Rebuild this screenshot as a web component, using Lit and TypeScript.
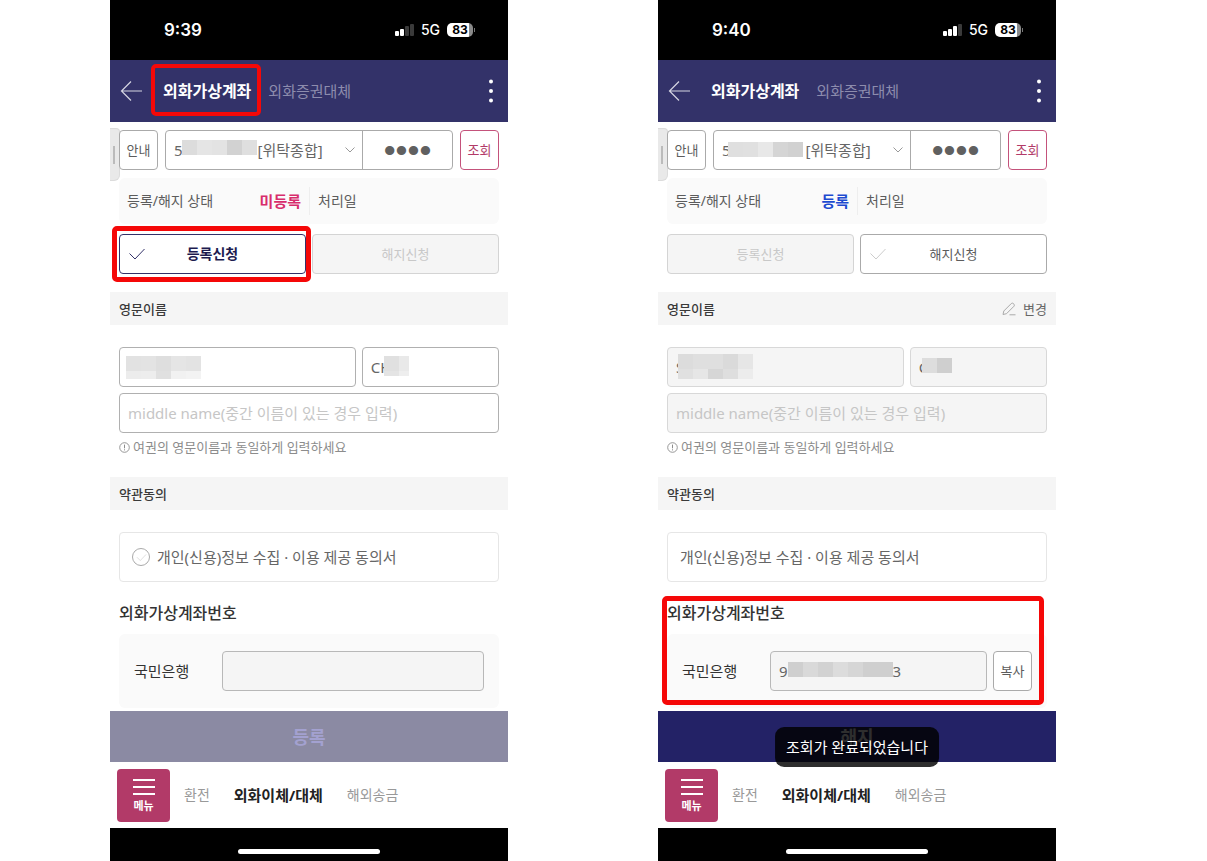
import { LitElement, html, svg, css, nothing } from "lit";
import { customElement, property } from "lit/decorators.js";

interface MaskRow {
  height: number;
  cells: string[];
}

interface Screen {
  id: string;
  time: string;
  bars: number;
  registered: boolean;
  account: string;
  accountMask: MaskRow[];
  lastName: string;
  lastMask: MaskRow[];
  firstName: string;
  firstMask: MaskRow[];
  bankNumber: string;
  bankMask: MaskRow[];
  toast: string;
}

const EM = "\u2003";

const SCREENS: Screen[] = [
  {
    id: "before",
    time: "9:39",
    bars: 2,
    registered: false,
    account: `5${EM.repeat(5)}[위탁종합]`,
    accountMask: [{ height: 15, cells: ["#dcdcdc", "#e5e5e5", "#e3e3e3", "#d2d2d2", "#dfdfdf"] }],
    lastName: "",
    lastMask: [
      { height: 15, cells: ["#e2e2e2", "#e3e3e3", "#dedede", "#e5e5e5", "#e3e3e3"] },
      { height: 8, cells: ["#ececec", "#ededed", "#e0e0e0", "#f1f1f1", "#f3f3f3"] },
    ],
    firstName: "CH",
    firstMask: [
      { height: 15, cells: ["#e0e0e0", "#e9e9e9"] },
      { height: 5, cells: ["#e4e4e4", "#eeeeee"] },
    ],
    bankNumber: "",
    bankMask: [],
    toast: "",
  },
  {
    id: "after",
    time: "9:40",
    bars: 3,
    registered: true,
    account: `5${EM.repeat(5)}[위탁종합]`,
    accountMask: [{ height: 15, cells: ["#dfdfdf", "#e0e0e0", "#e8e8e8", "#d5d5d5", "#d1d1d1"] }],
    lastName: "S",
    lastMask: [
      { height: 15, cells: ["#dcdcdc", "#dfdfdf", "#dfdfdf", "#dadada", "#e6e6e6"] },
      { height: 10, cells: ["#e0e0e0", "#e6e6e6", "#d6d6d6", "#dedede", "#ececec"] },
    ],
    firstName: "C",
    firstMask: [{ height: 15, cells: ["#dddddd", "#cfcfcf"] }],
    bankNumber: `9${EM.repeat(7)}3`,
    bankMask: [
      { height: 15, cells: ["#cfcfcf", "#d9d9d9", "#d2d2d2", "#dcdcdc", "#d6d6d6", "#cfcfcf", "#cfcfcf"] },
    ],
    toast: "조회가 완료되었습니다",
  },
];

const CELL = 15;

function mosaic(rows: MaskRow[], place: string, trim = 0) {
  if (!rows.length) return nothing;
  const width = rows[0].cells.length * CELL - trim;
  const height = rows.reduce((sum, row) => sum + row.height, 0);
  let top = 0;
  const rects = rows.map((row) => {
    const y = top;
    top += row.height;
    return row.cells.map(
      (fill, i) => svg`<rect x=${i * CELL} y=${y} width=${CELL} height=${row.height} fill=${fill}></rect>`
    );
  });
  return html`<svg class="mask ${place}" width=${width} height=${height} shape-rendering="crispEdges" aria-hidden="true">${rects}</svg>`;
}

const checkMark = (cls: string) => html`
  <svg class=${cls} width="18" height="14" viewBox="0 0 18 14" fill="none" stroke="currentColor" aria-hidden="true">
    <path d="M1.5 6.5 L7 12 L16.5 2"></path>
  </svg>`;

@customElement("phone-screen")
export class PhoneScreen extends LitElement {
  @property({ attribute: false }) data!: Screen;

  static styles = css`
    :host {
      display: flex;
      flex-direction: column;
      min-width: 0;
      background: #fff;
      color: #5c5c5c;
      font-family: "Noto Sans", "Noto Sans CJK KR", sans-serif;
      font-size: 15px;
      line-height: 20px;
    }
    * { box-sizing: border-box; }
    button, input, select { font: inherit; color: inherit; margin: 0; }
    button { padding: 0; border: 0; background: none; }
    a { color: inherit; text-decoration: none; }
    h2 { margin: 0; font-weight: 500; }
    svg { display: block; }

    .status {
      display: flex;
      align-items: center;
      justify-content: space-between;
      height: 60px;
      padding: 0 33px 0 54px;
      background: #000;
      color: #fff;
      font-family: Inter, sans-serif;
    }
    .time { font-size: 17px; font-weight: 600; }
    .signals { display: flex; align-items: center; gap: 7px; font-size: 14px; font-weight: 500; }
    .battery { display: flex; align-items: center; gap: 1px; }
    .level {
      width: 26px;
      height: 14px;
      border-radius: 5px;
      background: linear-gradient(90deg, #fff 83%, #8a8a8a 83%);
      color: #000;
      font-size: 12px;
      font-weight: 700;
      line-height: 14px;
      text-align: center;
    }
    .tip { width: 1px; height: 4px; background: #777; }

    .header {
      display: flex;
      align-items: center;
      height: 62px;
      padding: 0 11px 0 10px;
      background: #333269;
      color: #fff;
    }
    .tabs { display: flex; flex: 1; align-items: center; gap: 17px; padding-left: 20px; }
    .tab { position: relative; color: #8d8cad; }
    .tab.current { color: #fff; font-size: 16px; font-weight: 700; }

    .outline::after {
      content: "";
      position: absolute;
      z-index: 2;
      border: 5px solid #f50808;
      border-radius: 5px;
      pointer-events: none;
    }
    .tab.outline::after { inset: -17px -10px -15px -12px; border-width: 4px; }
    .choice.outline::after { inset: -9px -6px -9px -8px; }
    .virtual.outline::after { inset: -7px 3px 6px -5px; }

    .content { flex: 1; padding-top: 8px; }
    .block { margin: 0 9px; }

    .query { position: relative; display: flex; gap: 7px; }
    .handle {
      position: absolute;
      left: -9px;
      top: -2px;
      width: 10px;
      height: 53px;
      border-radius: 0 4px 6px 0;
      border: 1px solid #dcdcdc;
      border-left: 0;
      background: #e9e9e9;
    }
    .handle::after {
      content: "";
      position: absolute;
      left: 3px;
      top: 17px;
      width: 2px;
      height: 18px;
      background: #bbb;
    }
    .small {
      flex: none;
      position: relative;
      width: 39px;
      height: 40px;
      border: 1px solid #aaa;
      border-radius: 4px;
      background: #fff;
      font-size: 13px;
    }
    .small.accent { border-color: #c4527b; color: #b23a68; }
    .account {
      display: flex;
      flex: 1;
      min-width: 0;
      height: 40px;
      border: 1px solid #aaa;
      border-radius: 4px;
    }
    .picker { position: relative; flex: 1; min-width: 0; color: #666; }
    .picker select {
      appearance: none;
      width: 100%;
      height: 100%;
      padding: 0 24px 0 8px;
      border: 0;
      background: none;
    }
    .chevron { position: absolute; right: 6px; top: 15px; color: #999; pointer-events: none; }
    .pin {
      width: 90px;
      padding: 0;
      border: 0;
      border-left: 1px solid #aaa;
      background: none;
      color: #606060;
      font-family: "Liberation Sans", sans-serif;
      font-size: 34px;
      text-align: center;
    }

    .state {
      display: grid;
      grid-template-columns: 1fr 1fr;
      align-items: center;
      height: 46px;
      margin-top: 8px;
      border-radius: 6px;
      background: #fafafa;
      font-size: 14px;
    }
    .cell { display: flex; justify-content: space-between; align-items: center; height: 28px; padding: 0 8px; }
    .cell + .cell { border-left: 1px solid #eee; }
    .value { font-size: 15px; font-weight: 700; color: #d82d6c; }
    .value.on { color: #1d4ad0; }

    .choices { display: grid; grid-template-columns: 1fr 1fr; gap: 6px; margin-top: 10px; }
    .choice {
      position: relative;
      height: 40px;
      border: 1px solid #aaa;
      border-radius: 4px;
      background: #fff;
      font-size: 13px;
    }
    .choice:disabled { border-color: #d4d4d4; background: #f5f5f5; color: #c8c8c8; }
    .choice.picked { border-color: #333269; color: #1d1b4f; font-size: 14px; font-weight: 700; }
    .tick { position: absolute; left: 8px; top: 12px; color: #ccc; }
    .picked .tick { color: #333269; }

    .band {
      display: flex;
      justify-content: space-between;
      align-items: center;
      height: 33px;
      padding: 0 9px;
      background: #f5f5f5;
    }
    .band h2 { font-size: 13px; color: #3a3a3a; }
    .names-band { margin-top: 18px; }
    .terms-band { margin-top: 20px; }
    .change { display: flex; align-items: center; gap: 7px; font-size: 13px; color: #666; }
    .change svg { color: #aaa; }

    .names { display: grid; grid-template-columns: 19fr 11fr; gap: 6px; margin-top: 22px; }
    .field { position: relative; min-width: 0; }
    .text {
      width: 100%;
      height: 40px;
      padding: 0 8px;
      border: 1px solid #b0b0b0;
      border-radius: 4px;
      background: #fff;
      color: #666;
    }
    .text::placeholder { color: #c6c6c6; opacity: 1; }
    .text:disabled { border-color: #d8d8d8; background: #f5f5f5; }
    .middle { margin-top: 6px; }
    .hint { display: flex; align-items: center; gap: 3px; margin-top: 4px; font-size: 13px; color: #8c8c8c; }

    .mask { position: absolute; z-index: 1; pointer-events: none; }
    .before .at-account { left: 16px; top: 9px; }
    .after .at-account { left: 14px; top: 11px; }
    .before .at-last { left: 7px; top: 9px; }
    .after .at-last { left: 11px; top: 7px; }
    .before .at-first { left: 22px; top: 9px; }
    .after .at-first { left: 12px; top: 11px; }
    .at-bank { left: 18px; top: 11px; }

    .terms {
      display: flex;
      align-items: center;
      gap: 7px;
      height: 50px;
      margin-top: 22px;
      padding: 0 12px;
      border: 1px solid #e6e6e6;
      border-radius: 4px;
      color: #666;
    }
    .round { display: grid; place-items: center; color: #ccc; }
    .round > * { grid-area: 1 / 1; }
    .round input { appearance: none; width: 18px; height: 18px; border: 1px solid #aaa; border-radius: 50%; }
    .round svg { width: 11px; height: 9px; pointer-events: none; }

    .virtual { position: relative; padding-bottom: 3px; margin-top: 21px; }
    .virtual h2 { font-size: 16px; color: #333; }
    .bank {
      display: flex;
      align-items: center;
      gap: 6px;
      height: 74px;
      margin-top: 11px;
      padding: 0 15px;
      border-radius: 6px;
      background: #fafafa;
    }
    .bank label { width: 82px; color: #333; }
    .bank .field { flex: 1; }
    .bank .text { border-color: #b8b8b8; }
    .text:read-only { background: #f5f5f5; }

    .action { position: relative; }
    .submit {
      display: block;
      width: 100%;
      height: 51px;
      background: #232266;
      color: #fff;
      font-size: 18px;
      font-weight: 700;
    }
    .submit:disabled { background: #8b8aa3; color: #a3a1d0; }
    .toast {
      position: absolute;
      left: 50%;
      bottom: -5px;
      transform: translateX(-50%);
      padding: 10px 11px;
      border-radius: 9px;
      background: rgba(0, 0, 0, 0.82);
      color: #fff;
      white-space: nowrap;
    }

    .nav { display: flex; align-items: center; gap: 24px; height: 66px; padding-left: 7px; font-size: 14px; color: #999; }
    .menu {
      display: flex;
      flex-direction: column;
      align-items: center;
      justify-content: center;
      width: 53px;
      height: 53px;
      margin-right: -10px;
      border-radius: 4px;
      background: #b23a68;
      color: #fff;
      font-size: 11px;
      font-weight: 700;
      line-height: 16px;
    }
    .nav .here { font-size: 15px; font-weight: 700; color: #222; }
    .home { display: flex; justify-content: center; align-items: flex-end; height: 33px; padding-bottom: 7px; background: #000; }
    .home span { width: 142px; height: 5px; border-radius: 3px; background: #fff; }
  `;

  render() {
    const d = this.data;
    const on = d.registered;
    return html`
      <div class="status">
        <span class="time">${d.time}</span>
        <div class="signals">
          <svg width="19" height="12" aria-hidden="true">
            ${[5, 7, 10, 12].map(
              (h, i) => svg`<rect x=${i * 5} y=${12 - h} width="4" height=${h} rx="1" fill=${i < d.bars ? "#fff" : "#3a3a3a"}></rect>`
            )}
          </svg>
          <span>5G</span>
          <div class="battery"><span class="level">83</span><span class="tip"></span></div>
        </div>
      </div>

      <header class="header">
        <button aria-label="뒤로">
          <svg width="23" height="22" viewBox="0 0 23 22" fill="none" stroke="#d5d5e2" stroke-width="1.2">
            <path d="M22 11 H1.5 M11 1.5 L1.5 11 L11 20.5"></path>
          </svg>
        </button>
        <nav class="tabs">
          <a class="tab current ${on ? "" : "outline"}" href="#account">외화가상계좌</a>
          <a class="tab" href="#transfer">외화증권대체</a>
        </nav>
        <button aria-label="더보기">
          <svg width="12" height="26" viewBox="0 0 12 26" fill="#fff">
            <circle cx="6" cy="3.5" r="2"></circle><circle cx="6" cy="13" r="2"></circle><circle cx="6" cy="22.5" r="2"></circle>
          </svg>
        </button>
      </header>

      <main class="content ${d.id}">
        <div class="block query">
          <span class="handle"></span>
          <button class="small">안내</button>
          <div class="account">
            <div class="picker">
              <select aria-label="계좌"><option>${d.account}</option></select>
              ${mosaic(d.accountMask, "at-account")}
              <svg class="chevron" width="12" height="8" viewBox="0 0 12 8" fill="none" stroke="currentColor"><path d="M1.5 1.5 L6 6 L10.5 1.5"></path></svg>
            </div>
            <input class="pin" type="password" aria-label="계좌 비밀번호" .value=${"0000"} />
          </div>
          <button class="small accent">조회</button>
        </div>

        <div class="block state">
          <div class="cell"><span>등록/해지 상태</span><span class="value ${on ? "on" : ""}">${on ? "등록" : "미등록"}</span></div>
          <div class="cell"><span>처리일</span></div>
        </div>

        <div class="block choices">
          <button class="choice ${on ? "" : "picked outline"}" ?disabled=${on}>${on ? nothing : checkMark("tick")}등록신청</button>
          <button class="choice" ?disabled=${!on}>${on ? checkMark("tick") : nothing}해지신청</button>
        </div>

        <div class="band names-band">
          <h2>영문이름</h2>
          ${on
            ? html`<button class="change">
                <svg width="14" height="14" viewBox="0 0 14 14" fill="none" stroke="currentColor" stroke-linejoin="round">
                  <path d="M1 12.5 L1.8 9 L9.3 1.5 Q10.3 .7 11.3 1.5 L12 2.2 Q12.8 3.2 12 4.2 L4.5 11.7 Z M7.5 12.8 H13.5"></path>
                </svg>변경</button>`
            : nothing}
        </div>

        <div class="block names">
          <div class="field">
            <input class="text" aria-label="영문 성" .value=${d.lastName} ?disabled=${on} />${mosaic(d.lastMask, "at-last")}
          </div>
          <div class="field">
            <input class="text" aria-label="영문 이름" .value=${d.firstName} ?disabled=${on} />${mosaic(d.firstMask, "at-first", on ? 0 : 5)}
          </div>
        </div>
        <div class="block middle">
          <input class="text" aria-label="middle name" placeholder="middle name(중간 이름이 있는 경우 입력)" ?disabled=${on} />
        </div>
        <div class="block hint">
          <svg width="11" height="11" viewBox="0 0 11 11" fill="none" stroke="currentColor">
            <circle cx="5.5" cy="5.5" r="4.8" stroke-width=".9"></circle><path d="M5.5 2.6 V6.3 M5.5 7.3 V8.4"></path>
          </svg>
          <span>여권의 영문이름과 동일하게 입력하세요</span>
        </div>

        <div class="band terms-band"><h2>약관동의</h2></div>
        <div class="block terms">
          ${on
            ? html`<span>개인(신용)정보 수집 · 이용 제공 동의서</span>`
            : html`<span class="round"><input type="checkbox" id="agree" />${checkMark("mark")}</span>
                <label for="agree">개인(신용)정보 수집 · 이용 제공 동의서</label>`}
        </div>

        <section class="block virtual ${on ? "outline" : ""}">
          <h2>외화가상계좌번호</h2>
          <div class="bank">
            <label for="bank">국민은행</label>
            <div class="field">
              <input class="text" id="bank" readonly .value=${d.bankNumber} />${mosaic(d.bankMask, "at-bank")}
            </div>
            ${on ? html`<button class="small">복사</button>` : nothing}
          </div>
        </section>
      </main>

      <div class="action">
        <button class="submit" ?disabled=${!on}>${on ? "해지" : "등록"}</button>
        ${d.toast ? html`<div class="toast" role="status">${d.toast}</div>` : nothing}
      </div>
      <nav class="nav">
        <button class="menu">
          <svg width="24" height="21" viewBox="0 0 24 21" stroke="#fff" stroke-width="2"><path d="M1 3 H23 M1 10 H23 M1 17 H23"></path></svg>
          메뉴
        </button>
        <a href="#exchange">환전</a>
        <a class="here" href="#move">외화이체/대체</a>
        <a href="#remit">해외송금</a>
      </nav>
      <div class="home"><span></span></div>
    `;
  }
}

@customElement("app-root")
export class AppRoot extends LitElement {
  static styles = css`
    :host {
      display: grid;
      grid-template-columns: 1fr 1fr;
      gap: 150px;
      padding: 0 151px 0 110px;
      background: #fff;
    }
  `;

  render() {
    return SCREENS.map((s) => html`<phone-screen .data=${s}></phone-screen>`);
  }
}
